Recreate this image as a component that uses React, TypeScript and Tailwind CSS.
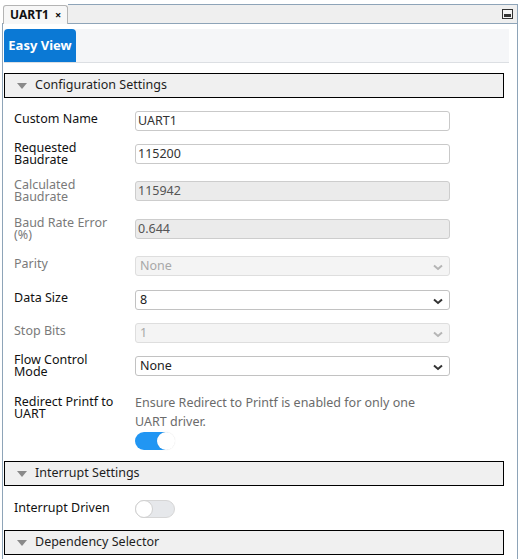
import React from "react";

const font = { fontFamily: '"Noto Sans", "Open Sans", sans-serif' };

function Chevron({ disabled }: { disabled?: boolean }) {
  return (
    <svg width="10" height="7" viewBox="0 0 10 7" className="absolute right-[6px] top-[7px]">
      <path
        d="M1 1.5l4 3.5 4-3.5"
        fill="none"
        stroke={disabled ? "#b5b5b5" : "#333"}
        strokeWidth="2"
      />
    </svg>
  );
}

function Triangle() {
  return (
    <svg width="10" height="6" viewBox="0 0 10 6" className="mr-[8px]">
      <polygon points="0,0 10,0 5,6" fill="#8a8a8a" />
    </svg>
  );
}

function SectionHeader({ title }: { title: string }) {
  return (
    <div className="w-[500px] h-[25px] border border-black bg-[#f0f0f0] flex items-center pl-[12px] text-[12.5px] text-[#1e1e1e]">
      <Triangle />
      <span>{title}</span>
    </div>
  );
}

type Row = {
  label: string;
  value: string;
  kind: "input" | "select";
  disabled?: boolean;
  tall?: boolean;
  h: string;
};

const rows: Row[] = [
  { label: "Custom Name", value: "UART1", kind: "input", h: "h-[33px]" },
  { label: "Requested Baudrate", value: "115200", kind: "input", tall: true, h: "h-[37px]" },
  { label: "Calculated Baudrate", value: "115942", kind: "input", disabled: true, tall: true, h: "h-[38px]" },
  { label: "Baud Rate Error (%)", value: "0.644", kind: "input", disabled: true, tall: true, h: "h-[37px]" },
  { label: "Parity", value: "None", kind: "select", disabled: true, h: "h-[34px]" },
  { label: "Data Size", value: "8", kind: "select", h: "h-[33px]" },
  { label: "Stop Bits", value: "1", kind: "select", disabled: true, h: "h-[33px]" },
  { label: "Flow Control Mode", value: "None", kind: "select", tall: true, h: "h-[37px]" },
];

function Field({ row }: { row: Row }) {
  const labelColor = row.disabled ? "text-[#7a7a7a]" : "text-[#111]";
  let box = "";
  if (row.kind === "input") {
    box = row.disabled
      ? "bg-[#ebebeb] border-[#cdcdcd] text-[#555]"
      : "bg-white border-[#c9c9c9] text-[#333]";
  } else {
    box = row.disabled
      ? "bg-[#f4f4f4] border-[#dedede] text-[#a8a8a8]"
      : "bg-white border-[#c2c2c2] text-[#222]";
  }
  return (
    <div className={`flex items-start pl-[10px] ${row.h}`}>
      <div className="w-[121px]">
        <div
          className={`max-w-[104px] text-[12.5px] ${labelColor} ${
            row.tall ? "leading-[12px] -mt-[2px]" : "leading-[15px]"
          }`}
        >
          {row.label}
        </div>
      </div>
      <div
        className={`relative w-[315px] h-[20px] border rounded-[3px] flex items-center pl-[2px] text-[12.5px] ${box} ${
          row.kind === "select" ? "pl-[4px]" : ""
        }`}
      >
        {row.value}
        {row.kind === "select" && <Chevron disabled={row.disabled} />}
      </div>
    </div>
  );
}

function Toggle({ on }: { on: boolean }) {
  if (on) {
    return (
      <div className="relative w-[38px] h-[18px] rounded-full bg-[#2196f3]">
        <div className="absolute right-[-2px] top-0 w-[18px] h-[18px] rounded-full bg-white shadow-[0_0_1px_rgba(0,0,0,0.15)]" />
      </div>
    );
  }
  return (
    <div className="relative w-[40px] h-[18px] rounded-full bg-[#e6e8eb] border border-[#d6d6d6]">
      <div className="absolute left-[-1px] top-[-1px] w-[18px] h-[18px] rounded-full bg-white border border-[#d0d0d0]" />
    </div>
  );
}

export default function App() {
  return (
    <div className="w-[519px] h-[559px] bg-white overflow-hidden" style={font}>
      <div className="ml-[2px] pt-[4px] w-[516px] h-full flex flex-col">
        {/* TAB STRIP */}
        <div className="flex h-[20px] border-b border-[#8ea4b8]">
          <div className="ml-[1px] w-[65px] h-[19px] mt-[1px] bg-[#f7f7f7] border border-b-0 border-[#b4b4b4] rounded-t-[3px] flex items-center pl-[6px] text-[12px] font-bold text-[#111]">
            UART1
            <span className="ml-[6px] text-[11px] font-bold">×</span>
          </div>
          <div className="flex-1 bg-[#efefef] border-t border-r border-[#8ea4b8] flex justify-end items-center pr-[4px]">
            <svg width="11" height="10" viewBox="0 0 11 10">
              <rect x="0.5" y="0.5" width="10" height="9" fill="#f4f4f4" stroke="#333" />
              <rect x="2" y="5" width="7" height="3" fill="#333" />
            </svg>
          </div>
        </div>

        {/* BODY */}
        <div className="flex-1 border-l border-r border-[#8ea4b8] pl-[1px]">
          <div className="mt-[5px] w-[505px] h-[34px] bg-[#f5f6f8] border-b border-[#dcdfe3]">
            <div className="w-[72px] h-[33px] rounded-t-[4px] bg-[#0b79d5] text-white font-bold text-[13px] flex items-center justify-center">
              Easy View
            </div>
          </div>

          <div className="mt-[10px]">
            <SectionHeader title="Configuration Settings" />
          </div>

          <div className="mt-[13px]">
            {rows.map((r) => (
              <Field key={r.label} row={r} />
            ))}
            <div className="flex items-start pl-[10px] h-[68px]">
              <div className="w-[121px] pt-[3px]">
                <div className="max-w-[106px] text-[12.5px] leading-[12px] text-[#111]">
                  Redirect Printf to UART
                </div>
              </div>
              <div className="w-[300px]">
                <div className="text-[12.5px] leading-[19px] text-[#6b6b6b]">
                  Ensure Redirect to Printf is enabled for only one UART driver.
                </div>
                <div className="mt-[1px]">
                  <Toggle on />
                </div>
              </div>
            </div>
          </div>

          <SectionHeader title="Interrupt Settings" />

          <div className="flex items-start pl-[10px] h-[44px] pt-[14px]">
            <div className="w-[121px] text-[12.5px] leading-[15px] text-[#111]">Interrupt Driven</div>
            <Toggle on={false} />
          </div>

          <SectionHeader title="Dependency Selector" />
        </div>
      </div>
    </div>
  );
}
